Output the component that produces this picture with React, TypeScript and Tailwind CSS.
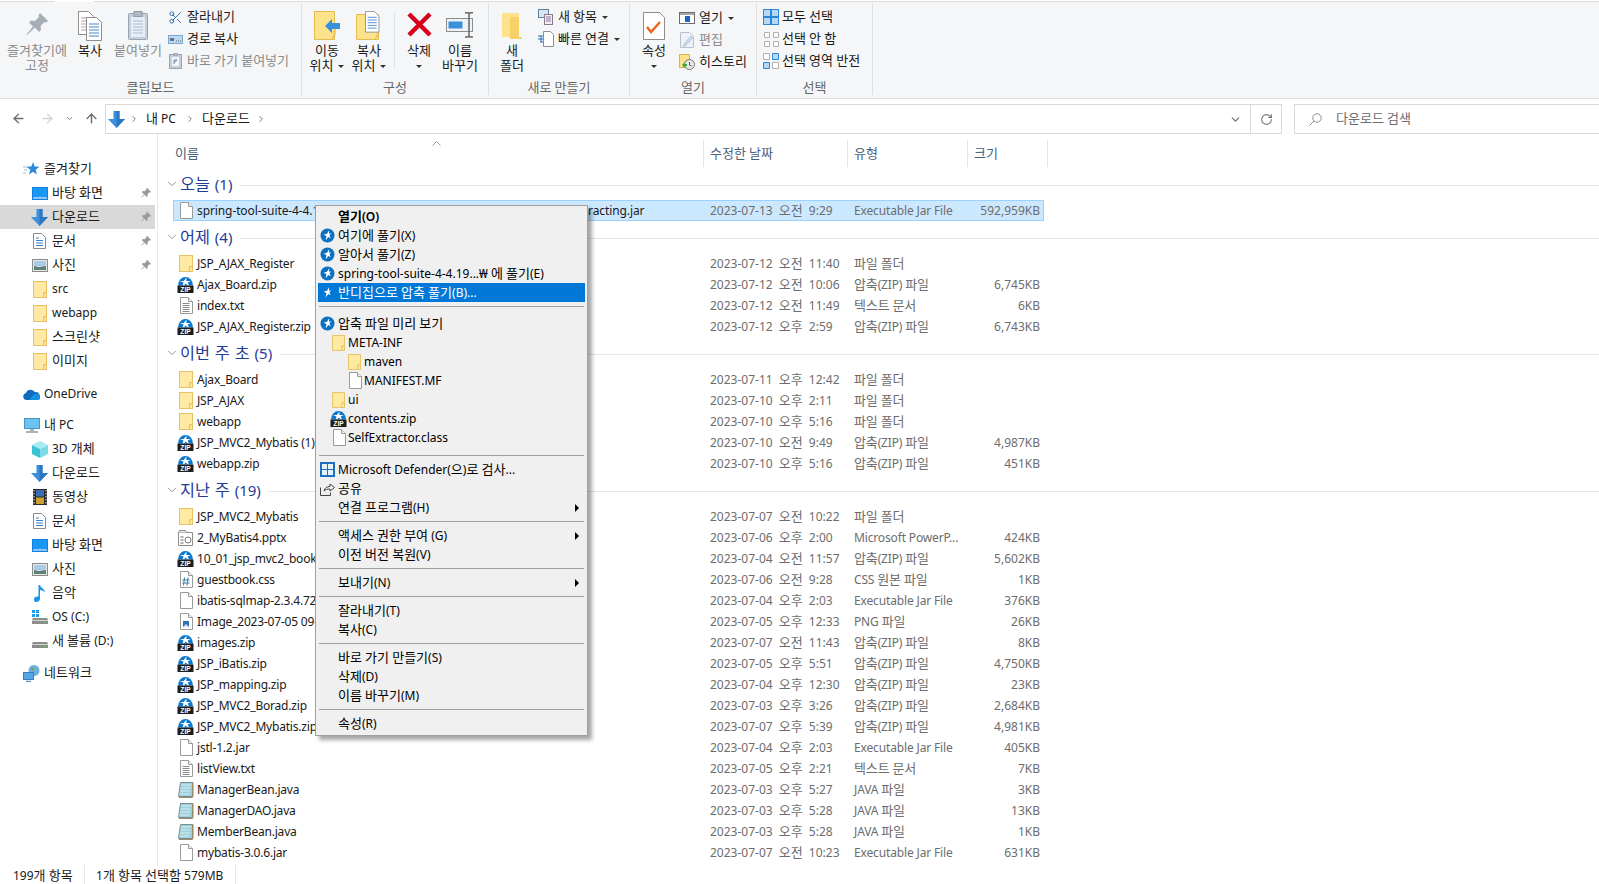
import { ArrowLeft, ArrowRight, ArrowUp, ChevronDown, ChevronRight, RotateCw, Scissors } from 'lucide-react';
import type { ReactNode } from 'react';

type IconKind = 'folder' | 'zip' | 'file' | 'txt' | 'java' | 'ppt' | 'css' | 'img';

interface FileRow {
  name: string;
  date: string;
  type: string;
  size?: string;
  icon: IconKind;
  selected?: boolean;
}

interface FileGroup {
  title: string;
  rows: FileRow[];
}

const ZIP = '압축(ZIP) 파일';
const JAR = 'Executable Jar File';
const DIR = '파일 폴더';

const groups: FileGroup[] = [
  {
    title: '오늘 (1)',
    rows: [
      { name: 'spring-tool-suite-4-4.19.0.RELEASE-e4.28.0-win32.win32.x86_64.self-extracting.jar', date: '2023-07-13 오전 9:29', type: JAR, size: '592,959KB', icon: 'file', selected: true },
    ],
  },
  {
    title: '어제 (4)',
    rows: [
      { name: 'JSP_AJAX_Register', date: '2023-07-12 오전 11:40', type: DIR, icon: 'folder' },
      { name: 'Ajax_Board.zip', date: '2023-07-12 오전 10:06', type: ZIP, size: '6,745KB', icon: 'zip' },
      { name: 'index.txt', date: '2023-07-12 오전 11:49', type: '텍스트 문서', size: '6KB', icon: 'txt' },
      { name: 'JSP_AJAX_Register.zip', date: '2023-07-12 오후 2:59', type: ZIP, size: '6,743KB', icon: 'zip' },
    ],
  },
  {
    title: '이번 주 초 (5)',
    rows: [
      { name: 'Ajax_Board', date: '2023-07-11 오후 12:42', type: DIR, icon: 'folder' },
      { name: 'JSP_AJAX', date: '2023-07-10 오후 2:11', type: DIR, icon: 'folder' },
      { name: 'webapp', date: '2023-07-10 오후 5:16', type: DIR, icon: 'folder' },
      { name: 'JSP_MVC2_Mybatis (1).zip', date: '2023-07-10 오전 9:49', type: ZIP, size: '4,987KB', icon: 'zip' },
      { name: 'webapp.zip', date: '2023-07-10 오후 5:16', type: ZIP, size: '451KB', icon: 'zip' },
    ],
  },
  {
    title: '지난 주 (19)',
    rows: [
      { name: 'JSP_MVC2_Mybatis', date: '2023-07-07 오전 10:22', type: DIR, icon: 'folder' },
      { name: '2_MyBatis4.pptx', date: '2023-07-06 오후 2:00', type: 'Microsoft PowerP...', size: '424KB', icon: 'ppt' },
      { name: '10_01_jsp_mvc2_book.zip', date: '2023-07-04 오전 11:57', type: ZIP, size: '5,602KB', icon: 'zip' },
      { name: 'guestbook.css', date: '2023-07-06 오전 9:28', type: 'CSS 원본 파일', size: '1KB', icon: 'css' },
      { name: 'ibatis-sqlmap-2.3.4.726.jar', date: '2023-07-04 오후 2:03', type: JAR, size: '376KB', icon: 'file' },
      { name: 'Image_2023-07-05 09-30-12.png', date: '2023-07-05 오후 12:33', type: 'PNG 파일', size: '26KB', icon: 'img' },
      { name: 'images.zip', date: '2023-07-07 오전 11:43', type: ZIP, size: '8KB', icon: 'zip' },
      { name: 'JSP_iBatis.zip', date: '2023-07-05 오후 5:51', type: ZIP, size: '4,750KB', icon: 'zip' },
      { name: 'JSP_mapping.zip', date: '2023-07-04 오후 12:30', type: ZIP, size: '23KB', icon: 'zip' },
      { name: 'JSP_MVC2_Borad.zip', date: '2023-07-03 오후 3:26', type: ZIP, size: '2,684KB', icon: 'zip' },
      { name: 'JSP_MVC2_Mybatis.zip', date: '2023-07-07 오후 5:39', type: ZIP, size: '4,981KB', icon: 'zip' },
      { name: 'jstl-1.2.jar', date: '2023-07-04 오후 2:03', type: JAR, size: '405KB', icon: 'file' },
      { name: 'listView.txt', date: '2023-07-05 오후 2:21', type: '텍스트 문서', size: '7KB', icon: 'txt' },
      { name: 'ManagerBean.java', date: '2023-07-03 오후 5:27', type: 'JAVA 파일', size: '3KB', icon: 'java' },
      { name: 'ManagerDAO.java', date: '2023-07-03 오후 5:28', type: 'JAVA 파일', size: '13KB', icon: 'java' },
      { name: 'MemberBean.java', date: '2023-07-03 오후 5:28', type: 'JAVA 파일', size: '1KB', icon: 'java' },
      { name: 'mybatis-3.0.6.jar', date: '2023-07-07 오전 10:23', type: JAR, size: '631KB', icon: 'file' },
    ],
  },
];

// Noto's hangul runs narrower than the latin next to it, so hangul gets a slightly larger size
function T({ s }: { s: string }) {
  return (
    <span>
      {s.split(/([가-힣₩]+)/).map((part, i) =>
        /[가-힣₩]/.test(part) ? (
          <span key={i} className="text-[1.085em]">
            {part}
          </span>
        ) : (
          part
        ),
      )}
    </span>
  );
}

function Folder({ small }: { small?: boolean }) {
  return (
    <svg width={small ? 13 : 14} height={small ? 16 : 17} viewBox="0 0 14 17" className="shrink-0">
      <rect x="0.5" y="0.5" width="13" height="16" fill="#ffe9a3" stroke="#e5c365" />
      <path d="M10.5 16.5v-5h3" fill="#ffdf85" stroke="#e5c365" />
    </svg>
  );
}

function PageBase({ children }: { children?: ReactNode }) {
  return (
    <svg width="14" height="17" viewBox="0 0 14 17" className="shrink-0">
      <path d="M1.5.5h8l4 4v12h-12z" fill="#fff" stroke="#9a9a9a" />
      <path d="M9.5.5v4h4" fill="#f0f0f0" stroke="#9a9a9a" />
      {children}
    </svg>
  );
}

function ZipIcon() {
  return (
    <svg width="17" height="17" viewBox="0 0 17 17" className="shrink-0">
      <path d="M1 9.5a7.5 8.5 0 0 1 15 0z" fill="#0b78cf" />
      <path d="M9.5 1.500L6.800 5H2.800l3.700 1.500-.9 3h1.400l1.600-2 2.400 2h1l-1.300-3 3-1.500H9.300z" fill="#fff" />
      <rect x="0.5" y="9.5" width="16" height="7.5" fill="#1d1d1d" />
      <text x="8.5" y="15.8" textAnchor="middle" fontSize="6.6" fontWeight="700" fill="#fff" fontFamily="Liberation Sans, sans-serif">
        ZIP
      </text>
    </svg>
  );
}

function FileIcon({ kind }: { kind: IconKind }) {
  if (kind === 'folder') return <Folder />;
  if (kind === 'zip') return <ZipIcon />;
  if (kind === 'txt')
    return (
      <PageBase>
        <path d="M3.5 6.5h7M3.5 8.5h7M3.5 10.5h7M3.5 12.5h7M3.5 14.5h7" stroke="#8c8c8c" />
      </PageBase>
    );
  if (kind === 'css')
    return (
      <PageBase>
        <path d="M5.5 6.5l-1 8M9 6.5l-1 8M3.5 9h7M3.5 12h7" stroke="#3d7ea6" />
      </PageBase>
    );
  if (kind === 'img')
    return (
      <PageBase>
        <rect x="4" y="8" width="6" height="6" fill="#2f6fb5" />
        <path d="M4 14l3-3 3 3z" fill="#cfe4f7" />
      </PageBase>
    );
  if (kind === 'ppt')
    return (
      <svg width="17" height="17" viewBox="0 0 17 17" className="shrink-0">
        <path d="M1.5 3.5h14v13h-14z" fill="#fff" stroke="#8d8d8d" />
        <path d="M1.5 3.5l1-2h6l1 2" fill="#eee" stroke="#8d8d8d" />
        <path d="M3.5 8h3M3.5 11h3M3.5 14h3" stroke="#666" />
        <circle cx="11" cy="11" r="3" fill="#fff" stroke="#777" />
      </svg>
    );
  if (kind === 'java')
    return (
      <svg width="17" height="17" viewBox="0 0 17 17" className="shrink-0">
        <path d="M3.5 1.5h12.5v14H1.5z" fill="#9fd0dc" stroke="#7a8d92" />
        <path d="M15.5 1.5v15H2" fill="none" stroke="#9c8a66" />
        <path d="M4 4h10M3.5 7h10M3 10h10M2.5 13h10" stroke="#d6edf3" />
      </svg>
    );
  return <PageBase />;
}

function Bolt({ onBlue }: { onBlue?: boolean }) {
  return (
    <svg width="15" height="15" viewBox="0 0 15 15" className="shrink-0">
      {!onBlue && <circle cx="7.5" cy="7.5" r="7" fill="#0b6fc2" />}
      <path d="M9.300 2L7 5.800l-3.500.9 3 1.300L5.600 12.500 8.300 9l2.400 1.200-1.200-3 1.800-1.900-2.400.4z" fill="#fff" />
    </svg>
  );
}

function PinSmall() {
  return (
    <svg width="12" height="12" viewBox="0 0 12 12" className="shrink-0">
      <path d="M7 .8l4.2 4.2-1 .6-.7-.3-2 2 .2 1.8-.9.9-2.2-2.2L1 11l-.2-.2 3.2-3.6L1.8 5l.9-.9 1.8.2 2-2-.3-.7z" fill="#9a9a9a" />
    </svg>
  );
}

function DownArrow({ w = 17 }: { w?: number }) {
  return (
    <svg width={w} height={w} viewBox="0 0 17 17" className="shrink-0">
      <path d="M5.5 0h6v8H17l-8.5 9L0 8h5.5z" fill="#3d8fdc" />
      <path d="M8.5 0h3v8H17l-8.5 9z" fill="#2a78c6" />
    </svg>
  );
}

const Star = () => (
  <svg width="17" height="17" viewBox="0 0 17 17" className="shrink-0">
    <path d="M10 1l1.6 4.6 4.9.2-3.9 3 1.4 4.8-4-2.8-4 2.8 1.4-4.8-3.9-3 4.9-.2z" fill="#2b87d8" />
    <path d="M0 6h4M1 9h3M0 12h3" stroke="#8cc0ea" />
  </svg>
);
const Desktop = () => (
  <svg width="16" height="13" viewBox="0 0 16 13" className="shrink-0">
    <rect x="0" y="0" width="16" height="13" rx="0.5" fill="#0f7fe0" />
    <rect x="1" y="1" width="14" height="10" fill="#1a97f0" />
    <path d="M1 11h14" stroke="#fff" />
  </svg>
);
const Doc = () => (
  <svg width="13" height="16" viewBox="0 0 13 16" className="shrink-0">
    <path d="M.5.5h8l4 4v11H.5z" fill="#fff" stroke="#8a8a8a" />
    <path d="M3 5h3M3 7.5h7M3 10h7M3 12.5h7" stroke="#3b83c4" />
  </svg>
);
const Pic = () => (
  <svg width="16" height="13" viewBox="0 0 16 13" className="shrink-0">
    <rect x="0.5" y="0.5" width="15" height="12" fill="#e9e9e9" stroke="#8b8b8b" />
    <rect x="2" y="2" width="12" height="5" fill="#a9cbe8" />
    <path d="M2 11V7l5 1 7-1v4z" fill="#5c8476" />
  </svg>
);
const Cloud = () => (
  <svg width="17" height="11" viewBox="0 0 17 11" className="shrink-0">
    <path d="M3.5 11a3.5 3.5 0 0 1-.6-6.9A5 5 0 0 1 12 3.2 3.9 3.9 0 0 1 13.2 11z" fill="#0f6cbd" />
    <path d="M6 11l5-6 3.5 0a3 3 0 0 1 0 6z" fill="#1490df" />
  </svg>
);
const Pc = () => (
  <svg width="16" height="15" viewBox="0 0 16 15" className="shrink-0">
    <rect x="0.5" y="0.5" width="15" height="10" fill="#6cc4f2" stroke="#4f94bf" />
    <path d="M6 11h4v2H6z" fill="#9fb5c4" />
    <path d="M2 14h12" stroke="#8b9aa5" strokeWidth="1.5" />
  </svg>
);
const Cube = () => (
  <svg width="16" height="17" viewBox="0 0 16 17" className="shrink-0">
    <path d="M8 0l8 4-8 4-8-4z" fill="#a6ecf2" />
    <path d="M0 4l8 4v9l-8-4z" fill="#3cc3d3" />
    <path d="M16 4l-8 4v9l8-4z" fill="#7adce6" />
  </svg>
);
const Film = () => (
  <svg width="14" height="16" viewBox="0 0 14 16" className="shrink-0">
    <rect width="14" height="16" fill="#2b2b2b" />
    <rect x="3" y="1" width="8" height="6.5" fill="#3a6fb5" />
    <rect x="3" y="8.5" width="8" height="6.5" fill="#c9a02c" />
    <path d="M1 1v14M13 1v14" stroke="#ddd" strokeDasharray="1.5 1.5" />
  </svg>
);
const Note = () => (
  <svg width="12" height="17" viewBox="0 0 12 17" className="shrink-0">
    <path d="M4.5 0h1.5c.5 3 5 3.5 5 7.5-1-1.5-3-2.5-5-2.5v8.5c0 2-2 3.5-4 3.5S0 15.500 0 14s2-3 4.500-2.500z" fill="#1596e8" />
  </svg>
);
const Drive = ({ win }: { win?: boolean }) => (
  <svg width="16" height="14" viewBox="0 0 16 14" className="shrink-0">
    {win && <path d="M0 0h3v3H0zM4 0h3v3H4zM0 4h3v3H0zM4 4h3v3H4z" fill="#1aa0e8" />}
    <path d="M1 8h14l1 2v4H0v-4z" fill="#8c8c8c" />
    <path d="M0 10h16v1H0z" fill="#d2d2d2" />
    <rect x="12" y="11.500" width="2" height="1.500" fill="#4fc74f" />
  </svg>
);
const Net = () => (
  <svg width="17" height="17" viewBox="0 0 17 17" className="shrink-0">
    <circle cx="11" cy="5.500" r="5.500" fill="#6fb0dd" />
    <path d="M8 2c2 0 4 1 3 3s-3 1-3-3z" fill="#6fa86b" />
    <rect x="0.500" y="7.500" width="10" height="7" fill="#52a8e6" stroke="#3a7fb5" />
    <path d="M3 16.500h5" stroke="#6c8ca5" strokeWidth="1.500" />
  </svg>
);

interface SideItem {
  label: string;
  icon: ReactNode;
  level: 0 | 1;
  pin?: boolean;
  active?: boolean;
  gap?: 'a' | 'b' | 'c';
}

const F = <Folder />;
const sideItems: SideItem[] = [
  { label: '즐겨찾기', icon: <Star />, level: 0 },
  { label: '바탕 화면', icon: <Desktop />, level: 1, pin: true },
  { label: '다운로드', icon: <DownArrow />, level: 1, pin: true, active: true },
  { label: '문서', icon: <Doc />, level: 1, pin: true },
  { label: '사진', icon: <Pic />, level: 1, pin: true },
  { label: 'src', icon: F, level: 1 },
  { label: 'webapp', icon: F, level: 1 },
  { label: '스크린샷', icon: F, level: 1 },
  { label: '이미지', icon: F, level: 1 },
  { label: 'OneDrive', icon: <Cloud />, level: 0, gap: 'a' },
  { label: '내 PC', icon: <Pc />, level: 0, gap: 'b' },
  { label: '3D 개체', icon: <Cube />, level: 1 },
  { label: '다운로드', icon: <DownArrow />, level: 1 },
  { label: '동영상', icon: <Film />, level: 1 },
  { label: '문서', icon: <Doc />, level: 1 },
  { label: '바탕 화면', icon: <Desktop />, level: 1 },
  { label: '사진', icon: <Pic />, level: 1 },
  { label: '음악', icon: <Note />, level: 1 },
  { label: 'OS (C:)', icon: <Drive win />, level: 1 },
  { label: '새 볼륨 (D:)', icon: <Drive />, level: 1 },
  { label: '네트워크', icon: <Net />, level: 0, gap: 'c' },
];

function Sidebar() {
  return (
    <div className="w-[158px] shrink-0 border-r border-[#e8e8e8] pt-[23px] text-[#1a1a1a]">
      {sideItems.map((it, i) => (
        <div
          key={i}
          className={`flex h-[24px] w-[155px] items-center ${it.active ? 'bg-[#d9d9d9]' : ''} ${
            it.gap === 'a' ? 'mt-[9px]' : it.gap === 'b' ? 'mt-[7px]' : it.gap === 'c' ? 'mt-[8px]' : ''
          }`}
        >
          <div className={`flex justify-center ${it.level === 1 ? 'ml-[31px] w-[17px]' : 'ml-[23px] w-[17px]'}`}>{it.icon}</div>
          <span className="ml-[4px] whitespace-nowrap">
            <T s={it.label} />
          </span>
          {it.pin && (
            <span className="ml-auto mr-[3px]">
              <PinSmall />
            </span>
          )}
        </div>
      ))}
    </div>
  );
}

function Caret({ alone }: { alone?: boolean }) {
  return <span className={`inline-block border-x-[3px] border-t-[3px] border-x-transparent border-t-[#333] align-middle ${alone ? '' : 'ml-[5px]'}`} />;
}

function Large({ icon, lines, caret, muted, className }: { icon: ReactNode; lines: string[]; caret?: boolean; muted?: boolean; className: string }) {
  return (
    <div className={`flex shrink-0 flex-col items-center pt-[8px] leading-[15px] ${muted ? 'text-[#8a8a8a]' : 'text-[#1a1a1a]'} ${className}`}>
      <div className="flex h-[33px] items-start justify-center">{icon}</div>
      {lines.map((l, i) => (
        <div key={i} className="h-[15px] whitespace-nowrap">
          <T s={l} />
          {caret && i === lines.length - 1 && <Caret alone={l === ''} />}
        </div>
      ))}
    </div>
  );
}

function Small({ icon, label, caret, muted, gap }: { icon: ReactNode; label: string; caret?: boolean; muted?: boolean; gap: string }) {
  return (
    <div className={`flex h-[22px] items-center whitespace-nowrap ${muted ? 'text-[#8a8a8a]' : 'text-[#1a1a1a]'}`}>
      <div className={`flex w-[16px] justify-center ${gap}`}>{icon}</div>
      <T s={label} />
      {caret && <Caret />}
    </div>
  );
}

function Group({ title, width, children }: { title: string; width: string; children: ReactNode }) {
  return (
    <div className={`flex shrink-0 flex-col ${width}`}>
      <div className="flex h-[77px]">{children}</div>
      <div className="h-[16px] text-center leading-[16px] text-[#666]">
        <T s={title} />
      </div>
    </div>
  );
}

const GroupSep = () => <div className="mt-[2px] h-[91px] w-px shrink-0 bg-[#dfe0e1]" />;

const Paper = ({ x, y, lines = '#4a86cf' }: { x: number; y: number; lines?: string }) => (
  <g transform={`translate(${x} ${y})`}>
    <path d="M.5.5h10l5 5v18H.5z" fill="#fff" stroke="#8d8d8d" />
    <path d="M3 7h10M3 10h10M3 13h10M3 16h10M3 19h10" stroke={lines} />
  </g>
);

function Ribbon() {
  return (
    <div className="shrink-0">
      <div className="flex h-[2px]">
        <div className="w-[55px] border-b border-[#dadbdc]" />
        <div className="w-[39px]" />
        <div className="flex-1 border-b border-[#dadbdc]" />
      </div>
      <div className="flex h-[97px] border-b border-[#dadbdc] bg-[#f5f6f7]">
        <Group title="클립보드" width="w-[301px]">
          <Large
            muted
            className="ml-[6px] w-[62px]"
            lines={['즐겨찾기에', '고정']}
            icon={
              <svg width="22" height="24" viewBox="0 0 22 24" className="mt-[3px]">
                <path d="M14 0l8 8-2 1.500-1.500-.5-4 4 .5 4-2 2-4-4.500L1 22l-.5-.5 6.500-8L3 9.500l2-2 4 .5 4-4-.5-1.500z" fill="#a5adb7" />
              </svg>
            }
          />
          <Large
            className="w-[44px]"
            lines={['복사']}
            icon={
              <svg width="25" height="30" viewBox="0 0 25 30" className="mt-[1px]">
                <Paper x={0} y={0} lines="#a8a8a8" />
                <Paper x={8} y={6} />
              </svg>
            }
          />
          <Large
            muted
            className="w-[52px]"
            lines={['붙여넣기']}
            icon={
              <svg width="20" height="29" viewBox="0 0 20 29" className="mt-[1px]">
                <rect x="0.500" y="2.500" width="19" height="26" rx="1" fill="#c3cfdd" stroke="#9aa5b2" />
                <rect x="3" y="6" width="14" height="20" fill="#e6edf5" />
                <path d="M5 10h10M5 13h10M5 16h10M5 19h10M5 22h10" stroke="#aebccb" />
                <rect x="6" y="0.500" width="8" height="5" fill="#b0bac6" stroke="#8f9aa6" />
              </svg>
            }
          />
          <div className="ml-[3px] pt-[4px]">
            <Small gap="mr-[4px]" label="잘라내기" icon={<Scissors size={15} color="#2a6db0" strokeWidth={1.500} />} />
            <Small
              gap="mr-[4px]"
              label="경로 복사"
              icon={
                <svg width="15" height="9" viewBox="0 0 15 9">
                  <rect x="0.500" y="0.500" width="14" height="8" fill="#bcd9f2" stroke="#7aa7cf" />
                  <path d="M2 3l1 3 1-3 1 3 1-3M8 6h1M10 6h1M12 6h1" stroke="#334" fill="none" strokeWidth="0.700" />
                </svg>
              }
            />
            <Small
              muted
              gap="mr-[4px]"
              label="바로 가기 붙여넣기"
              icon={
                <svg width="13" height="16" viewBox="0 0 13 16">
                  <rect x="0.500" y="1.500" width="12" height="14" fill="#c3cfdd" stroke="#9aa5b2" />
                  <rect x="3" y="4" width="7" height="9" fill="#f1f4f8" />
                  <path d="M5 11V7h3M8 7L5.500 9.500" stroke="#6f87a3" fill="none" />
                  <rect x="4" y="0" width="5" height="3" fill="#a8b2be" />
                </svg>
              }
            />
          </div>
        </Group>
        <GroupSep />
        <Group title="구성" width="w-[186px]">
          <Large
            className="ml-[4px] w-[42px]"
            lines={['이동', '위치']}
            caret
            icon={
              <svg width="27" height="29" viewBox="0 0 27 29" className="mt-[1px]">
                <path d="M.5.5h20v28H.5z" fill="#fde28c" stroke="#e3bc4f" />
                <path d="M18 28l3-4v-12" fill="#f4cf66" stroke="#e3bc4f" />
                <path d="M11 15l7-7v4h8v6h-8v4z" fill="#3b90dc" />
              </svg>
            }
          />
          <Large
            className="w-[42px]"
            lines={['복사', '위치']}
            caret
            icon={
              <svg width="26" height="29" viewBox="0 0 26 29" className="mt-[1px]">
                <path d="M.5 3.500h22v25H.5z" fill="#fde28c" stroke="#e3bc4f" />
                <path d="M19 28l3.500-4v-10" fill="#f4cf66" stroke="#e3bc4f" />
                <g transform="translate(9 0) scale(.9)">
                  <Paper x={0} y={0} />
                </g>
              </svg>
            }
          />
          <div className="ml-[4px] mt-[11px] h-[56px] w-px bg-[#dfe0e1]" />
          <Large
            className="ml-[5px] w-[38px]"
            lines={['삭제', '']}
            caret
            icon={
              <svg width="27" height="27" viewBox="0 0 27 27" className="mt-[1px]">
                <path d="M3 3l21 21M24 3L3 24" stroke="#d9001b" strokeWidth="4.500" />
              </svg>
            }
          />
          <Large
            className="w-[44px]"
            lines={['이름', '바꾸기']}
            icon={
              <svg width="28" height="26" viewBox="0 0 28 26" className="mt-[2px]">
                <rect x="0.500" y="6.500" width="26" height="13" fill="#eef2f6" stroke="#8d8d8d" />
                <rect x="2.500" y="9.500" width="14" height="7" fill="#3b90dc" />
                <path d="M19 .8h3l1 1 1-1h3M19 25h3l1-1 1 1h3M23 2v22" fill="none" stroke="#666" strokeWidth="1.500" />
              </svg>
            }
          />
        </Group>
        <GroupSep />
        <Group title="새로 만들기" width="w-[140px]">
          <Large
            className="ml-[3px] w-[40px]"
            lines={['새', '폴더']}
            icon={
              <svg width="20" height="29" viewBox="0 0 20 29" className="mt-[2px]">
                <path d="M0 1h17v24H0z" fill="#fde28c" />
                <path d="M8 5h9v20h3v2H8z" fill="#f5d168" />
              </svg>
            }
          />
          <div className="ml-[6px] pt-[4px]">
            <Small
              gap="mr-[4px]"
              label="새 항목"
              caret
              icon={
                <svg width="16" height="16" viewBox="0 0 16 16">
                  <rect x="0.500" y="0.500" width="10" height="8" fill="#d5e5f4" stroke="#607d96" />
                  <rect x="6.500" y="5.500" width="8" height="10" fill="#fbe9ef" stroke="#8a7a87" />
                  <path d="M8 8h5M8 10h5M8 12h5" stroke="#7a7fa6" />
                </svg>
              }
            />
            <Small
              gap="mr-[4px]"
              label="빠른 연결"
              caret
              icon={
                <svg width="16" height="16" viewBox="0 0 16 16">
                  <path d="M5.500.5h7l3 3v12h-10z" fill="#fff" stroke="#8d8d8d" />
                  <path d="M0 5h5M0 8h5M2 11h3M3 5v6" stroke="#2a6db0" />
                </svg>
              }
            />
          </div>
        </Group>
        <GroupSep />
        <Group title="열기" width="w-[126px]">
          <Large
            className="ml-[4px] w-[40px]"
            lines={['속성', '']}
            caret
            icon={
              <svg width="22" height="28" viewBox="0 0 22 28" className="mt-[2px]">
                <path d="M.5.5h16l5 5v22H.5z" fill="#fff" stroke="#8d8d8d" />
                <path d="M4 15l4 5 9-10" fill="none" stroke="#f0641e" strokeWidth="2.500" />
              </svg>
            }
          />
          <div className="ml-[5px] pt-[5px]">
            <Small
              gap="mr-[4px]"
              label="열기"
              caret
              icon={
                <svg width="16" height="12" viewBox="0 0 16 12">
                  <rect x="0.500" y="0.500" width="15" height="11" fill="#fff" stroke="#6d6d6d" />
                  <rect x="1" y="1" width="14" height="2" fill="#a9a9a9" />
                  <rect x="6" y="4" width="5" height="6" fill="#1a66c4" />
                </svg>
              }
            />
            <Small
              muted
              gap="mr-[4px]"
              label="편집"
              icon={
                <svg width="14" height="16" viewBox="0 0 14 16">
                  <path d="M.5.5h9l4 4v11H.5z" fill="#eef2f7" stroke="#b5c1d0" />
                  <path d="M4 12l7-8 2 1.500-7 8-2.500 1z" fill="#cdd9e8" stroke="#a7b7ca" strokeWidth="0.600" />
                </svg>
              }
            />
            <Small
              gap="mr-[4px]"
              label="히스토리"
              icon={
                <svg width="16" height="16" viewBox="0 0 16 16">
                  <rect x="0.500" y="0.500" width="10" height="13" fill="#fde28c" stroke="#d9b64a" />
                  <circle cx="10.500" cy="10.500" r="5" fill="#e7e7e7" stroke="#777" />
                  <path d="M10.500 8v3l2 1" stroke="#555" fill="none" />
                  <path d="M3 11l3-3v2h2v2H6v2z" fill="#3aa33a" />
                </svg>
              }
            />
          </div>
        </Group>
        <GroupSep />
        <Group title="선택" width="w-[115px]">
          <div className="ml-[6px] pt-[4px]">
            <Small
              gap="mr-[3px]"
              label="모두 선택"
              icon={
                <svg width="16" height="16" viewBox="0 0 16 16">
                  <rect width="16" height="16" fill="#2b88d8" />
                  <path d="M1 1h6v6H1zM9 1h6v6H9zM1 9h6v6H1zM9 9h6v6H9z" fill="#b5d8f5" />
                </svg>
              }
            />
            <Small
              gap="mr-[3px]"
              label="선택 안 함"
              icon={
                <svg width="15" height="15" viewBox="0 0 15 15">
                  <path d="M.5.5h5v5h-5zM9.500.5h5v5h-5zM.5 9.500h5v5h-5zM9.500 9.500h5v5h-5z" fill="#fff" stroke="#b0b0b0" />
                </svg>
              }
            />
            <Small
              gap="mr-[3px]"
              label="선택 영역 반전"
              icon={
                <svg width="16" height="16" viewBox="0 0 16 16">
                  <path d="M.5.5h6v6h-6zM9.500 9.500h6v6h-6z" fill="#fff" stroke="#b0b0b0" />
                  <path d="M9.500.5h6v6h-6zM.5 9.500h6v6h-6z" fill="#b5d8f5" stroke="#2b88d8" />
                </svg>
              }
            />
          </div>
        </Group>
        <GroupSep />
      </div>
    </div>
  );
}

function AddressBar() {
  return (
    <div className="flex h-[35px] shrink-0 items-start pt-[5px] text-[#1a1a1a]">
      <div className="flex h-[29px] w-[105px] shrink-0 items-center">
        <ArrowLeft size={15} color="#6d6d6d" strokeWidth={2.250} className="ml-[11px]" />
        <ArrowRight size={15} color="#d4d4d4" strokeWidth={2.250} className="ml-[14px]" />
        <ChevronDown size={9} color="#777" strokeWidth={2.500} className="ml-[10px]" />
        <ArrowUp size={15} color="#6d6d6d" strokeWidth={2.250} className="ml-[10px]" />
      </div>
      <div className="flex h-[30px] w-[1177px] shrink-0 items-center border border-[#d9d9d9]">
        <span className="ml-[2px]">
          <DownArrow />
        </span>
        <ChevronRight size={10} color="#666" strokeWidth={2} className="ml-[4px]" />
        <span className="ml-[7px]">
          <T s="내 PC" />
        </span>
        <ChevronRight size={10} color="#666" strokeWidth={2} className="ml-[9px]" />
        <span className="ml-[7px]">
          <T s="다운로드" />
        </span>
        <ChevronRight size={10} color="#666" strokeWidth={2} className="ml-[6px]" />
        <div className="ml-auto flex h-full w-[30px] items-center justify-center">
          <ChevronDown size={13} color="#777" strokeWidth={2.500} />
        </div>
        <div className="flex h-full w-[31px] items-center justify-center border-l border-[#d9d9d9]">
          <RotateCw size={13} color="#777" strokeWidth={2} />
        </div>
      </div>
      <div className="ml-[12px] flex h-[30px] flex-1 items-center border-y border-l border-[#d9d9d9] text-[#6d6d6d]">
        <svg width="13" height="13" viewBox="0 0 13 13" className="ml-[14px] shrink-0">
          <circle cx="8" cy="5" r="4.200" fill="none" stroke="#8f8f8f" />
          <path d="M5 8l-4.500 4.500" stroke="#8f8f8f" />
        </svg>
        <span className="ml-[14px]">
          <T s="다운로드 검색" />
        </span>
      </div>
    </div>
  );
}

function ListHeader() {
  return (
    <div className="mt-[6px] flex h-[28px] shrink-0 pb-px text-[#4c607a]">
      <div className="relative flex w-[546px] items-center border-r border-[#e5e5e5] pl-[17px]">
        <T s="이름" />
        <svg width="9" height="5" viewBox="0 0 9 5" className="absolute left-[274px] top-[1px]">
          <path d="M.5 4.500l4-4 4 4" fill="none" stroke="#9a9a9a" />
        </svg>
      </div>
      <div className="flex w-[144px] items-center border-r border-[#e5e5e5] pl-[6px]">
        <T s="수정한 날짜" />
      </div>
      <div className="flex w-[120px] items-center border-r border-[#e5e5e5] pl-[6px]">
        <T s="유형" />
      </div>
      <div className="flex w-[80px] items-center border-r border-[#e5e5e5] pl-[6px]">
        <T s="크기" />
      </div>
    </div>
  );
}

function Row({ row }: { row: FileRow }) {
  return (
    <div className={`ml-[15px] flex h-[21px] w-[871px] items-center border ${row.selected ? 'border-[#99d1ff] bg-[#cce8ff]' : 'border-transparent'}`}>
      <div className="flex w-[530px] shrink-0 items-center overflow-hidden pl-[2px] text-[#1a1a1a]">
        <div className="flex w-[19px] shrink-0 justify-center">
          <FileIcon kind={row.icon} />
        </div>
        <span className={`ml-[2px] whitespace-nowrap ${row.selected ? 'tracking-[-0.1px]' : 'tracking-[-0.2px]'}`}>
          <T s={row.name} />
        </span>
      </div>
      <div className="w-[144px] shrink-0 whitespace-nowrap pl-[6px] text-[#6d6d6d] [word-spacing:3px]">
        <T s={row.date} />
      </div>
      <div className="w-[120px] shrink-0 whitespace-nowrap pl-[6px] tracking-[-0.15px] text-[#6d6d6d]">
        <T s={row.type} />
      </div>
      <div className="w-[75px] shrink-0 pr-[3px] text-right text-[#6d6d6d]">{row.size}</div>
    </div>
  );
}

function FileList() {
  return (
    <div className="flex min-w-0 flex-1 flex-col overflow-hidden">
      <ListHeader />
      {groups.map((g) => (
        <div key={g.title}>
          <div className="flex h-[32px] items-center">
            <ChevronDown size={14} color="#8a8a8a" strokeWidth={1.500} className="ml-[7px]" />
            <span className="ml-[1px] mt-[1px] whitespace-nowrap text-[15px] text-[#1f3d94] [word-spacing:1px]">
              <T s={g.title} />
            </span>
            <div className="ml-[8px] mt-[2px] h-px flex-1 bg-[#e5e5e5]" />
          </div>
          {g.rows.map((r) => (
            <Row key={r.name} row={r} />
          ))}
        </div>
      ))}
    </div>
  );
}

type MenuEntry =
  | { sep: string }
  | { label: string; bold?: boolean; icon?: ReactNode; hot?: boolean; arrow?: boolean; indent?: string; iconSlot?: string };

const defenderIcon = (
  <svg width="15" height="15" viewBox="0 0 15 15">
    <path d="M0 0h15v15H0z" fill="#1f6fc0" />
    <path d="M2 2h5v5H2zM8 2h5v5H8zM2 8h5v5H2zM8 8h5v5H8z" fill="#e8f2fb" />
  </svg>
);
const shareIcon = (
  <svg width="15" height="14" viewBox="0 0 15 14">
    <path d="M.5 5.500v8h10v-3M4 9c.5-3 3-4.500 6-4.500V2l4.500 3.500L10 9V7c-2.500 0-4.500.5-6 2z" fill="#f0f0f0" stroke="#444" />
  </svg>
);

const sepNormal = 'h-[9px] pt-[4px]';

const menu: MenuEntry[] = [
  { label: '열기(O)', bold: true },
  { label: '여기에 풀기(X)', icon: <Bolt /> },
  { label: '알아서 풀기(Z)', icon: <Bolt /> },
  { label: 'spring-tool-suite-4-4.19...₩ 에 풀기(E)', icon: <Bolt /> },
  { label: '반디집으로 압축 풀기(B)...', icon: <Bolt onBlue />, hot: true },
  { sep: 'h-[12px] pt-[4px]' },
  { label: '압축 파일 미리 보기', icon: <Bolt /> },
  { label: 'META-INF', icon: <Folder small />, iconSlot: 'ml-[14px] w-[13px]', indent: 'ml-[3px]' },
  { label: 'maven', icon: <Folder small />, iconSlot: 'ml-[30px] w-[13px]', indent: 'ml-[3px]' },
  { label: 'MANIFEST.MF', icon: <PageBase />, iconSlot: 'ml-[30px] w-[13px]', indent: 'ml-[3px]' },
  { label: 'ui', icon: <Folder small />, iconSlot: 'ml-[14px] w-[13px]', indent: 'ml-[3px]' },
  { label: 'contents.zip', icon: <ZipIcon />, iconSlot: 'ml-[12px] w-[17px]', indent: 'ml-[1px]' },
  { label: 'SelfExtractor.class', icon: <PageBase />, iconSlot: 'ml-[14px] w-[13px]', indent: 'ml-[3px]' },
  { sep: 'h-[13px] pt-[8px]' },
  { label: 'Microsoft Defender(으)로 검사...', icon: defenderIcon },
  { label: '공유', icon: shareIcon },
  { label: '연결 프로그램(H)', arrow: true },
  { sep: sepNormal },
  { label: '액세스 권한 부여 (G)', arrow: true },
  { label: '이전 버전 복원(V)' },
  { sep: sepNormal },
  { label: '보내기(N)', arrow: true },
  { sep: sepNormal },
  { label: '잘라내기(T)' },
  { label: '복사(C)' },
  { sep: sepNormal },
  { label: '바로 가기 만들기(S)' },
  { label: '삭제(D)' },
  { label: '이름 바꾸기(M)' },
  { sep: sepNormal },
  { label: '속성(R)' },
];

function ContextMenu() {
  return (
    <div className="absolute left-[315px] top-[205px] w-[273px] border border-[#a0a0a0] bg-[#f0f0f0] px-[2px] pb-[2px] pt-[1px] text-black shadow-[4px_4px_4px_rgba(0,0,0,0.35)]">
      {menu.map((m, i) =>
        'sep' in m ? (
          <div key={i} className={`px-[1px] ${m.sep}`}>
            <div className="h-px bg-[#a0a0a0]" />
          </div>
        ) : (
          <div key={i} className={`flex h-[19px] items-center whitespace-nowrap ${m.hot ? 'bg-[#0078d7] text-white' : ''} ${m.bold ? 'font-semibold' : ''}`}>
            <div className={`flex shrink-0 justify-center ${m.iconSlot ?? 'ml-[2px] w-[15px]'}`}>{m.icon}</div>
            <span className={m.indent ?? 'ml-[3px]'}>
              <T s={m.label} />
            </span>
            {m.arrow && <span className="ml-auto mr-[6px] border-y-[4px] border-l-[4px] border-y-transparent border-l-black" />}
          </div>
        ),
      )}
    </div>
  );
}

function StatusBar() {
  return (
    <div className="flex h-[19px] shrink-0 items-center text-[#1a1a1a]">
      <div className="h-full w-[85px] border-r border-[#e5e5e5] pl-[13px] leading-[20px]">
        <T s="199개 항목" />
      </div>
      <div className="h-full w-[151px] border-r border-[#e5e5e5] pl-[11px] leading-[20px]">
        <T s="1개 항목 선택함 579MB" />
      </div>
    </div>
  );
}

export default function App() {
  return (
    <div className="relative flex h-[884px] w-[1599px] flex-col overflow-hidden bg-white text-[12px] [font-family:'Noto_Sans','Noto_Sans_CJK_KR',sans-serif]">
      <Ribbon />
      <AddressBar />
      <div className="flex min-h-0 flex-1">
        <Sidebar />
        <FileList />
      </div>
      <StatusBar />
      <ContextMenu />
    </div>
  );
}
